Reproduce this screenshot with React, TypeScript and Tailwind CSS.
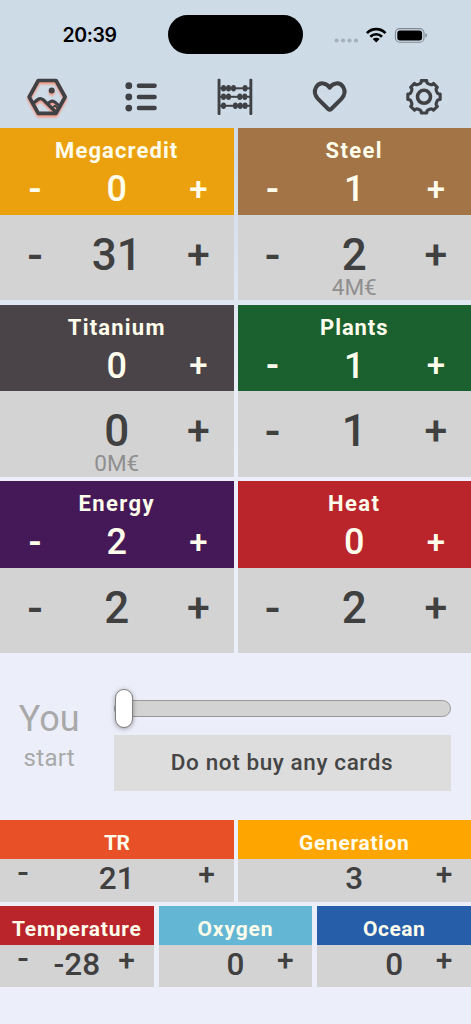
import { useState } from "react"
import clsx from "clsx"

interface Resource {
  name: string
  color: string
  spacing: string
  production: number
  amount: number
  value?: string
  canLowerProduction: boolean
  canSpend: boolean
}

const resources: Resource[] = [
  { name: "Megacredit", color: "bg-[#eba10e]", spacing: "tracking-[1.1px]", production: 0, amount: 31, canLowerProduction: true, canSpend: true },
  { name: "Steel", color: "bg-[#a27446]", spacing: "tracking-[1.4px]", production: 1, amount: 2, value: "4M€", canLowerProduction: true, canSpend: true },
  { name: "Titanium", color: "bg-[#4a4448]", spacing: "tracking-[1.2px]", production: 0, amount: 0, value: "0M€", canLowerProduction: false, canSpend: false },
  { name: "Plants", color: "bg-[#1b612f]", spacing: "tracking-[0.9px]", production: 1, amount: 1, canLowerProduction: true, canSpend: true },
  { name: "Energy", color: "bg-[#451957]", spacing: "tracking-[1.4px]", production: 2, amount: 2, canLowerProduction: true, canSpend: true },
  { name: "Heat", color: "bg-[#b9252a]", spacing: "tracking-[1.5px]", production: 0, amount: 2, canLowerProduction: false, canSpend: true },
]

// gear outline with eight teeth
const gearPath = (() => {
  const points: string[] = []
  for (let i = 0; i < 8; i++) {
    const steps = [[-17, 13.8], [-12, 14.4], [-9.5, 16.4], [9.5, 16.4], [12, 14.4], [17, 13.8]]
    for (const [offset, r] of steps) {
      const a = ((i * 45 + offset - 90) * Math.PI) / 180
      points.push(`${(22 + r * Math.cos(a)).toFixed(2)} ${(21.8 + r * Math.sin(a)).toFixed(2)}`)
    }
  }
  return `M${points.join("L")}Z`
})()

function StatusBar() {
  return (
    <div className="flex h-[66px] items-start pt-[15px]">
      <div className="w-[168px] pl-[11px] text-center font-['Inter'] text-[19.5px] leading-[41px] font-semibold tracking-[-0.4px] text-black">20:39</div>
      <div className="h-[39px] w-[134.5px] rounded-full bg-black" />
      <div className="flex h-[39px] flex-1 items-center pl-[31px]">
        <svg className="h-[18px] w-[94px]" viewBox="0 0 94 18">
          <g fill="#a5b0bc">
            <circle cx="2.6" cy="14.5" r="2.1" />
            <circle cx="9" cy="14.5" r="2.1" />
            <circle cx="15.5" cy="14.5" r="2.1" />
            <circle cx="22" cy="14.5" r="2.1" />
          </g>
          <g fill="none" stroke="#000" strokeWidth="2.7">
            <path d="M32.9 7.1a13 13 0 0 1 18.6 0" />
            <path d="M36.4 10.7a8.1 8.1 0 0 1 11.6 0" />
          </g>
          <path d="M38.7 13.1a5 5 0 0 1 7 0L42.2 16.6Z" fill="#000" />
          <rect x="61.4" y="2.6" width="28.6" height="13.6" rx="4.2" fill="none" stroke="#808a94" strokeWidth="1.1" />
          <rect x="63.3" y="4.4" width="24.8" height="10" rx="2.7" fill="#000" />
          <path d="M91.4 7.1c2.1.8 2.1 3.8 0 4.6Z" fill="#808a94" />
        </svg>
      </div>
    </div>
  )
}

function NavIcons() {
  return (
    <nav className="grid h-[62px] grid-cols-5 justify-items-center pt-[8.6px] text-[#3f4144]">
      <svg className="size-11 drop-shadow-[0_2px_1px_#f5917c]" viewBox="0 0 44 44" fill="none" stroke="currentColor" strokeWidth="3.7" strokeLinejoin="round" strokeLinecap="round">
        <path d="M13.3 5.5H31L40.1 22L31 38.3H13.3L4.2 22Z" />
        <path d="M8.2 28.2L13 24.4Q15.6 22.6 18.2 24.8L31 37.2" strokeWidth="3.3" />
        <path d="M23.6 28L25.2 26.8Q27.8 25.2 30.3 27.3L35 31.6" strokeWidth="3" />
        <path d="M28.2 32L30 30.6L33.4 34" strokeWidth="1.8" />
        <circle cx="26.7" cy="15.4" r="3" fill="currentColor" stroke="none" />
      </svg>
      <svg className="size-11" viewBox="0 0 44 44" fill="currentColor">
        {[10.7, 22, 33.1].map((y) => (
          <g key={y}>
            <circle cx="9.8" cy={y} r="3.4" />
            <rect x="17.7" y={y - 2.3} width="20.1" height="4.5" rx="2.2" />
          </g>
        ))}
      </svg>
      <svg className="size-11" viewBox="0 0 44 44" fill="currentColor">
        <rect x="4.6" y="3.8" width="2.9" height="36.2" rx="1" />
        <rect x="36.4" y="3.8" width="2.9" height="36.2" rx="1" />
        {[
          { y: 13.3, beads: [10.5, 15.5, 20.5, 32.1] },
          { y: 21.8, beads: [10.5, 15.5, 26.8, 31.8] },
          { y: 30.8, beads: [10.5, 22.4, 27.3, 32.1] },
        ].map(({ y, beads }) => (
          <g key={y}>
            <rect x="6" y={y - 1} width="32" height="2" />
            {beads.map((x) => (
              <ellipse key={x} cx={x} cy={y} rx="2.5" ry="3.3" />
            ))}
          </g>
        ))}
      </svg>
      <svg className="size-11" viewBox="0 0 44 44" fill="none" stroke="currentColor" strokeWidth="4" strokeLinejoin="round">
        <path d="M21.7 12.7C18.6 7.2 11.4 7 8.3 11.8C6 15.8 6.8 20.4 10 23.8L20.2 34Q21.7 35.4 23.2 34L33.4 23.8C36.6 20.4 37.4 15.8 35.1 11.8C32 7 24.8 7.2 21.7 12.7Z" />
      </svg>
      <svg className="size-11" viewBox="0 0 44 44" fill="none" stroke="currentColor" strokeWidth="3.1" strokeLinejoin="round">
        <path d={gearPath} />
        <circle cx="22" cy="21.8" r="6.5" strokeWidth="3.6" />
      </svg>
    </nav>
  )
}

function ResourceCard({ resource }: { resource: Resource }) {
  const [production, setProduction] = useState(resource.production)
  const [amount, setAmount] = useState(resource.amount)

  return (
    <section className="flex h-[172.2px] flex-col text-center">
      <div className={clsx("h-[86.7px] text-[#fffdec]", resource.color)}>
        <h2 className={clsx("h-11 text-[22px] leading-[45px] font-bold", resource.spacing)}>{resource.name}</h2>
        <div className="grid h-[33px] grid-cols-[3fr_4fr_3fr] leading-[33px]">
          <button className="text-[38px] font-medium" onClick={() => setProduction(production - 1)}>{resource.canLowerProduction && "-"}</button>
          <span className="text-[36px] leading-[34px] font-medium">{production}</span>
          <button className="text-[33px] font-medium" onClick={() => setProduction(production + 1)}>+</button>
        </div>
      </div>
      <div className="h-[85.5px] bg-[#d3d3d3] pt-[18px] text-[#404040]">
        <div className="grid h-11 grid-cols-[3fr_4fr_3fr] leading-[44px]">
          <button className="text-[46px] font-medium" onClick={() => setAmount(amount - 1)}>{resource.canSpend && "-"}</button>
          <span className="text-[44px] font-medium">{amount}</span>
          <button className="text-[41px] font-medium" onClick={() => setAmount(amount + 1)}>+</button>
        </div>
        {resource.value && <div className="text-[22.5px] leading-[21px] text-[#8f8f8f]">{resource.value}</div>}
      </div>
    </section>
  )
}

interface CounterProps {
  name: string
  color: string
  spacing: string
  initial: number
  canLower?: boolean
}

function Counter({ name, color, spacing, initial, canLower = false }: CounterProps) {
  const [value, setValue] = useState(initial)

  return (
    <section className="text-center">
      <h2 className={clsx("h-[38.8px] text-[21px] leading-[46px] font-bold text-[#fffdec]", color, spacing)}>{name}</h2>
      <div className="grid h-[42.4px] grid-cols-[46px_1fr_46px] items-start bg-[#d3d3d3] text-[#404040]">
        <button className="text-[34px] leading-[27px] font-medium" onClick={() => setValue(value - 1)}>{canLower && "-"}</button>
        <span className="text-[31.5px] leading-[39px] font-medium">{value}</span>
        <button className="pr-2 text-[30px] leading-[29px] font-medium" onClick={() => setValue(value + 1)}>+</button>
      </div>
    </section>
  )
}

export default function App() {
  return (
    <div className="h-[1024px] w-[471px] overflow-hidden bg-[linear-gradient(#cddbe7_0px,#cfdce8_150px,#e8edf7_380px,#eceff9_480px)] font-['Roboto',sans-serif]">
      <StatusBar />
      <NavIcons />

      <main>
        <div className="grid grid-cols-2 gap-x-1 gap-y-[4.4px]">
          {resources.map((resource) => (
            <ResourceCard key={resource.name} resource={resource} />
          ))}
        </div>

        {/* Card purchase */}
        <div className="flex h-[167px] pt-[35px]">
          <div className="w-[113.5px] pr-[15px] text-center text-[#a9a9a9]">
            <div className="pt-[11px] text-[36px] leading-[40px]">You</div>
            <div className="text-[24px] leading-[38px] tracking-[0.3px]">start</div>
          </div>
          <div className="w-[337px]">
            <div className="flex h-10 items-center">
              <div className="flex h-[17px] w-full items-center rounded-full border border-[#999] bg-[#d3d3d3]">
                <div className="h-[39px] w-[18px] shrink-0 rounded-full border border-[#808080] bg-white shadow-[0_1px_5px_rgba(0,0,0,0.35)]" />
              </div>
            </div>
            <div className="mt-[6.5px] h-14 bg-[#ddd] text-center text-[22.5px] leading-[54px] font-medium tracking-[0.6px] text-[#454545]">Do not buy any cards</div>
          </div>
        </div>

        <div className="grid grid-cols-2 gap-1">
          <Counter name="TR" color="bg-[#e85027]" spacing="tracking-[-0.4px]" initial={21} canLower />
          <Counter name="Generation" color="bg-[#ffa500]" spacing="tracking-[0.7px]" initial={3} />
        </div>
        <div className="mt-[4.4px] grid grid-cols-3 gap-[5px]">
          <Counter name="Temperature" color="bg-[#b9252a]" spacing="tracking-[0.8px]" initial={-28} canLower />
          <Counter name="Oxygen" color="bg-[#64b7d4]" spacing="tracking-[0.9px]" initial={0} />
          <Counter name="Ocean" color="bg-[#265eaa]" spacing="tracking-[0.5px]" initial={0} />
        </div>
      </main>
    </div>
  )
}
